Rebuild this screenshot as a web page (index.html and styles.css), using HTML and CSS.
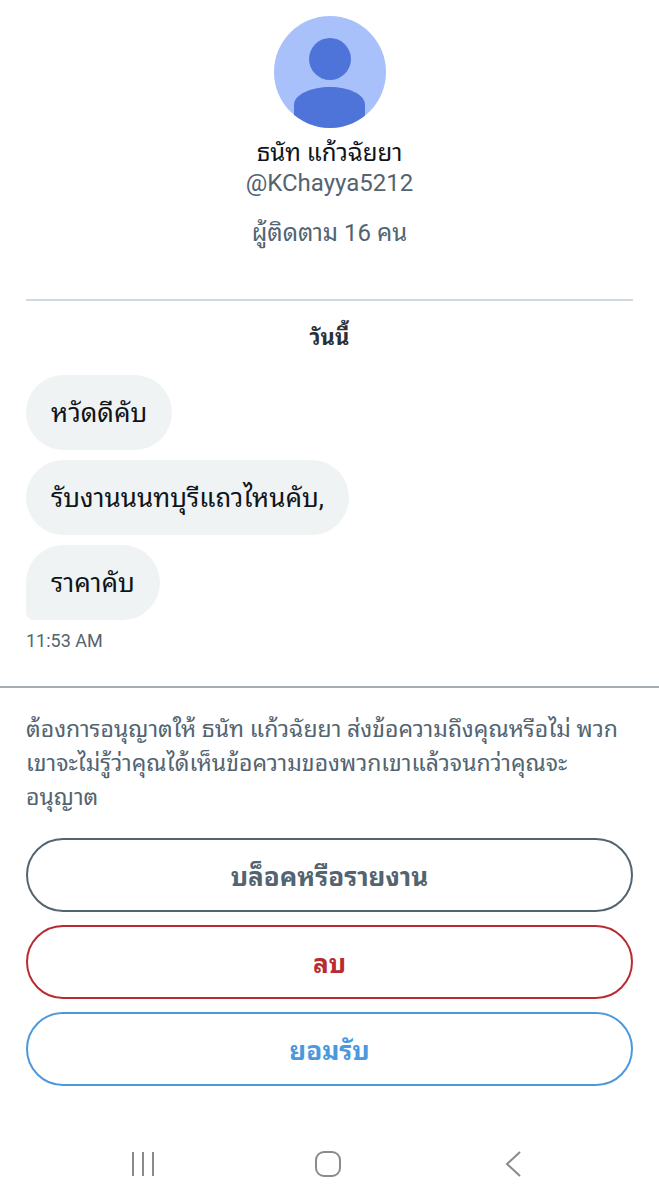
FILE: index.html
```html
<!DOCTYPE html>
<html lang="th">
<head>
    <meta charset="UTF-8">
    <meta name="viewport" content="width=device-width, initial-scale=1">
    <title>ข้อความ</title>
    <link rel="stylesheet" href="styles.css">
</head>
<body>
<div id="container">
    <div class="profile">
        <svg class="avatar" viewBox="0 0 112 112">
            <clipPath id="circle"><circle cx="56" cy="56" r="56"/></clipPath>
            <g clip-path="url(#circle)">
                <rect width="112" height="112" fill="#a8c1fa"/>
                <circle cx="56" cy="43" r="21" fill="#4f74d9"/>
                <path d="M20 112V89C20 78 38 71 56 71S91 78 91 89V112Z" fill="#4f74d9"/>
            </g>
        </svg>
        <h1>ธนัท แก้วฉัยยา</h1>
        <p class="handle">@KChayya5212</p>
        <p class="followers">ผู้ติดตาม 16 คน</p>
    </div>

    <div class="chat">
        <h2>วันนี้</h2>
        <p class="bubble">หวัดดีคับ</p>
        <p class="bubble">รับงานนนทบุรีแถวไหนคับ,</p>
        <p class="bubble last">ราคาคับ</p>
        <p class="time">11:53 AM</p>
    </div>

    <div class="request">
        <p>ต้องการอนุญาตให้ ธนัท แก้วฉัยยา ส่งข้อความถึงคุณหรือไม่ พวกเขาจะไม่รู้ว่าคุณได้เห็นข้อความของพวกเขาแล้วจนกว่าคุณจะอนุญาต</p>
        <button class="report">บล็อคหรือรายงาน</button>
        <button class="delete">ลบ</button>
        <button class="accept">ยอมรับ</button>
    </div>

    <div class="nav">
        <button aria-label="แอปล่าสุด">
            <svg viewBox="0 0 28 28"><path d="M4 2V26M14 2V26M24 2V26"/></svg>
        </button>
        <button aria-label="หน้าหลัก">
            <svg viewBox="0 0 28 28"><rect x="1" y="2" width="24" height="24" rx="8"/></svg>
        </button>
        <button aria-label="กลับ">
            <svg viewBox="0 0 28 28"><path d="M18 2L5 14L18 26"/></svg>
        </button>
    </div>
</div>
</body>
</html>
```
FILE: styles.css
```css
* {
    margin: 0;
    padding: 0;
    box-sizing: border-box;
}

body {
    background: #fff;
    color: #0f1419;
    font-family: Roboto, "Noto Sans Thai Looped", "Noto Looped Thai", Loma, Waree, Garuda, "Noto Sans Thai", sans-serif;
}

.profile {
    margin: 0 26px;
    padding-top: 16px;
    height: 301px;
    border-bottom: 2px solid #cfd9de;
    text-align: center;
}

.avatar {
    display: block;
    width: 112px;
    height: 112px;
    margin: 0 auto 10px;
}

.profile h1 {
    font-size: 24px;
    font-weight: 400;
    line-height: 30px;
}

.handle, .followers {
    color: #536471;
    font-size: 24px;
    line-height: 30px;
}

.followers {
    margin-top: 20px;
}

.chat {
    display: flex;
    flex-direction: column;
    align-items: flex-start;
    padding: 22px 26px 34px;
    border-bottom: 2px solid #a5adb2;
}

.chat h2 {
    align-self: center;
    margin-bottom: 22px;
    color: #2b2f36;
    font-size: 22px;
    line-height: 30px;
}

.bubble {
    margin-bottom: 10px;
    padding: 21px 25px 19px;
    border-radius: 38px;
    background: #eff3f4;
    font-size: 26px;
    line-height: 35px;
}

.last {
    border-bottom-left-radius: 8px;
}

.time {
    color: #536471;
    font-size: 18px;
    line-height: 22px;
}

.request {
    display: flex;
    flex-direction: column;
    gap: 13px;
    padding: 25px 26px 64px;
}

.request p {
    margin-bottom: 10px;
    color: #536471;
    font-size: 23px;
    line-height: 34px;
}

.request button {
    height: 74px;
    padding-bottom: 3px;
    border: 2px solid;
    border-radius: 37px;
    background: none;
    font-family: inherit;
    font-size: 26px;
    font-weight: 700;
}

.report {
    color: #536471;
}

.delete {
    color: #b92b32;
}

.accept {
    color: #4a99de;
}

.nav {
    display: flex;
    justify-content: space-around;
    padding: 0 50px 20px;
}

.nav button {
    width: 28px;
    height: 28px;
    border: none;
    background: none;
}

.nav svg {
    display: block;
    fill: none;
    stroke: #8a8a8a;
    stroke-width: 2;
}
```
